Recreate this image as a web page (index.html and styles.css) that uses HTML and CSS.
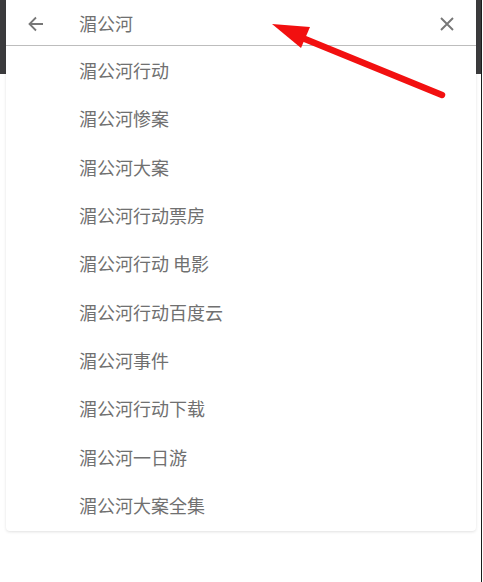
FILE: index.html
```html
<!DOCTYPE html>
<html lang="zh-CN">
<head>
  <meta charset="UTF-8">
  <title>搜索</title>
  <link rel="stylesheet" href="styles.css">
</head>
<body>

<div class="pantalla">
  <div class="tarjeta">
    <div class="cabecera">
      <span class="icono atras">
        <svg width="18" height="18" viewBox="0 0 18 18"><path d="M16 9H2.5M9 2.5L2.5 9L9 15.5" fill="none" stroke="#777" stroke-width="1.8"/></svg>
      </span>
      <span class="consulta">湄公河</span>
      <span class="icono cerrar">
        <svg width="16" height="16" viewBox="0 0 16 16"><path d="M2 2L14 14M14 2L2 14" fill="none" stroke="#777" stroke-width="1.9"/></svg>
      </span>
    </div>
    <ul class="sugerencias">
      <li>湄公河行动</li>
      <li>湄公河惨案</li>
      <li>湄公河大案</li>
      <li>湄公河行动票房</li>
      <li>湄公河行动 电影</li>
      <li>湄公河行动百度云</li>
      <li>湄公河事件</li>
      <li>湄公河行动下载</li>
      <li>湄公河一日游</li>
      <li>湄公河大案全集</li>
    </ul>
  </div>

  <svg class="flecha" width="483" height="120" viewBox="0 0 483 120">
    <line x1="300" y1="37" x2="442" y2="95" stroke="#f21010" stroke-width="6.5" stroke-linecap="round"/>
    <polygon points="272,24 310,27 301,48" fill="#f21010"/>
  </svg>
</div>

</body>
</html>
```

FILE: styles.css
```css
body {
  margin: 0;
  background: #fff;
  font-family: "Noto Sans CJK SC", "Noto Sans", sans-serif;
}
.pantalla {
  position: relative;
  width: 470px;
  height: 582px;
  padding: 0 5px 0 6px;
  border-right: 1px solid #1c1c1c;
  background: linear-gradient(#3b3b3d 74px, #fff 74px);
}
.tarjeta {
  background: #fff;
  border-radius: 0 0 4px 4px;
  box-shadow: 0 1px 3px rgba(0,0,0,0.12);
  padding-bottom: 2px;
}
.cabecera {
  display: flex;
  align-items: center;
  height: 45px;
  border-bottom: 1px solid #bdbdbd;
  color: #707070;
  font-size: 18px;
}
.icono {
  display: flex;
  align-items: center;
  justify-content: center;
}
.atras {
  width: 18px;
  margin: 2px 0 0 21px;
}
.consulta {
  flex: 1;
  margin-left: 34px;
}
.cerrar {
  width: 16px;
  margin: 2px 21px 0 0;
}
.sugerencias {
  list-style: none;
  margin: 0;
  padding: 0;
}
.sugerencias li {
  height: 48.33px;
  line-height: 48.33px;
  padding-left: 73px;
  font-size: 18px;
  color: #707070;
}
.flecha {
  position: absolute;
  left: 0;
  top: 0;
}
```
